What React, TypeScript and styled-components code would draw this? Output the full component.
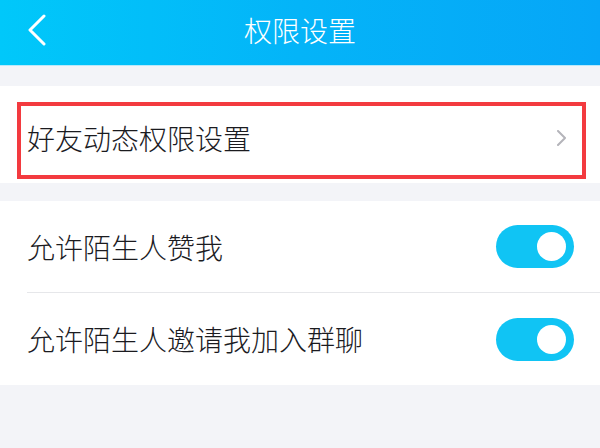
import React, { FC } from 'react';
import styled, { createGlobalStyle } from 'styled-components';

const GlobalStyle = createGlobalStyle`
  html, body {
    margin: 0;
    padding: 0;
    background: #f3f4f8;
  }
  body {
    font-family: "Noto Sans CJK SC", "Noto Sans", sans-serif;
  }
`;

const StPage = styled.div`
  width: 600px;
  height: 448px;
  background: #f3f4f8;
  display: flex;
  flex-direction: column;
  overflow: hidden;
`;

const StHeader = styled.header`
  height: 66px;
  flex-shrink: 0;
  display: grid;
  grid-template-columns: 80px 1fr 80px;
  align-items: center;
  background: linear-gradient(90deg, #00c8fa 0%, #04b4f8 50%, #06a6f7 100%);
  border-bottom: 1px solid #b9e9fb;
  box-sizing: border-box;
`;

const StBack = styled.span`
  display: inline-flex;
  align-items: center;
  padding-left: 27px;
  height: 100%;
  margin-top: -6px;
`;

const StTitle = styled.h1`
  margin: 0 0 6px;
  text-align: center;
  color: #ffffff;
  font-size: 28px;
  font-weight: 300;
  letter-spacing: 0;
`;

const StCard = styled.section<{ $top: number; $padTop?: number; $padBottom?: number }>`
  margin-top: ${({ $top }) => $top}px;
  background: #ffffff;
  padding: ${({ $padTop = 0 }) => $padTop}px 0 ${({ $padBottom = 0 }) => $padBottom}px;
  display: flex;
  flex-direction: column;
`;

const StMarked = styled.div`
  margin: 0 14px 0 17px;
  height: 77px;
  box-sizing: border-box;
  border: 4px solid #f33a3f;
  display: flex;
  align-items: center;
  justify-content: space-between;
  padding: 0 14px 6px 6px;
`;

const StRow = styled.div<{ $divider?: boolean }>`
  height: 92px;
  margin-left: 27px;
  padding-right: 26px;
  display: flex;
  align-items: center;
  justify-content: space-between;
  box-sizing: border-box;
  border-bottom: ${({ $divider }) => ($divider ? '1px solid #e6e7ea' : 'none')};
`;

const StLabel = styled.span`
  font-size: 28px;
  color: #1b1b1f;
  font-weight: 300;
  line-height: 1;
`;

const StSwitch = styled.span<{ $on: boolean }>`
  width: 78px;
  height: 43px;
  border-radius: 22px;
  background: ${({ $on }) => ($on ? '#10c4f4' : '#e5e5ea')};
  display: inline-flex;
  align-items: center;
  justify-content: ${({ $on }) => ($on ? 'flex-end' : 'flex-start')};
  padding: 0 8px;
  box-sizing: border-box;
  &::after {
    content: '';
    width: 29px;
    height: 29px;
    border-radius: 50%;
    background: #ffffff;
  }
`;

const BackIcon: FC = () => (
  <svg width="20" height="32" viewBox="0 0 20 32" fill="none">
    <polyline
      points="17,2 3,16 17,30"
      stroke="#ffffff"
      strokeWidth="3"
      strokeLinecap="round"
      strokeLinejoin="round"
    />
  </svg>
);

const ChevronIcon: FC = () => (
  <svg width="12" height="16" viewBox="0 0 12 16" fill="none">
    <polyline
      points="2,1 9,8 2,15"
      stroke="#b4b4ba"
      strokeWidth="2"
      strokeLinecap="round"
      strokeLinejoin="round"
    />
  </svg>
);

const App: FC = () => {
  return (
    <StPage>
      <GlobalStyle />
      <StHeader>
        <StBack>
          <BackIcon />
        </StBack>
        <StTitle>权限设置</StTitle>
        <span />
      </StHeader>

      <StCard $top={20} $padTop={16} $padBottom={4}>
        <StMarked>
          <StLabel>好友动态权限设置</StLabel>
          <ChevronIcon />
        </StMarked>
      </StCard>

      <StCard $top={18}>
        <StRow $divider>
          <StLabel>允许陌生人赞我</StLabel>
          <StSwitch $on />
        </StRow>
        <StRow>
          <StLabel>允许陌生人邀请我加入群聊</StLabel>
          <StSwitch $on />
        </StRow>
      </StCard>
    </StPage>
  );
};

export default App;
